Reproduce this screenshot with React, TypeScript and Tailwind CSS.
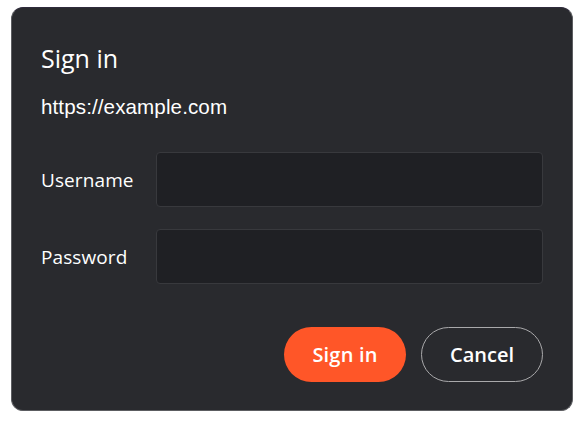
import React from "react";

export default function App() {
  const seg = { fontFamily: '"Open Sans", "Noto Sans", sans-serif' };
  const arial = { fontFamily: '"Liberation Sans", Arial, sans-serif' };
  return (
    <div className="w-[584px] h-[421px] bg-white pt-[7px] pl-[11px]">
      <div
        className="w-[562px] h-[404px] rounded-[12px] bg-[#292a2e] border border-[#5c5d61] border-t-[#2f2b3c] px-[29px] pt-[34px] text-white"
        style={seg}
      >
        <h2 className="text-[25px] leading-[32px] font-normal">Sign in</h2>
        <div className="mt-[21px] text-[20.6px] leading-[24px] tracking-[0.1px]" style={arial}>
          https://example.com
        </div>
        <div className="mt-[33px] flex flex-col gap-[22px]">
          <div className="flex items-center">
            <label className="w-[115px] text-[19px] leading-[24px] tracking-[0.1px]">Username</label>
            <div className="flex-1 h-[55px] rounded-[4px] bg-[#1f2024] border border-[#38393d]" />
          </div>
          <div className="flex items-center">
            <label className="w-[115px] text-[19px] leading-[24px] tracking-[0.1px]">Password</label>
            <div className="flex-1 h-[55px] rounded-[4px] bg-[#1f2024] border border-[#38393d]" />
          </div>
        </div>
        <div className="mt-[43px] flex justify-end gap-[15px]">
          <button className="w-[122px] h-[55px] rounded-full bg-[#ff5628] text-[20px] font-semibold text-white tracking-[0.2px]">
            Sign in
          </button>
          <button className="w-[122px] h-[55px] rounded-full border border-[#a9a9ab] text-[20px] font-semibold text-white">
            Cancel
          </button>
        </div>
      </div>
    </div>
  );
}
